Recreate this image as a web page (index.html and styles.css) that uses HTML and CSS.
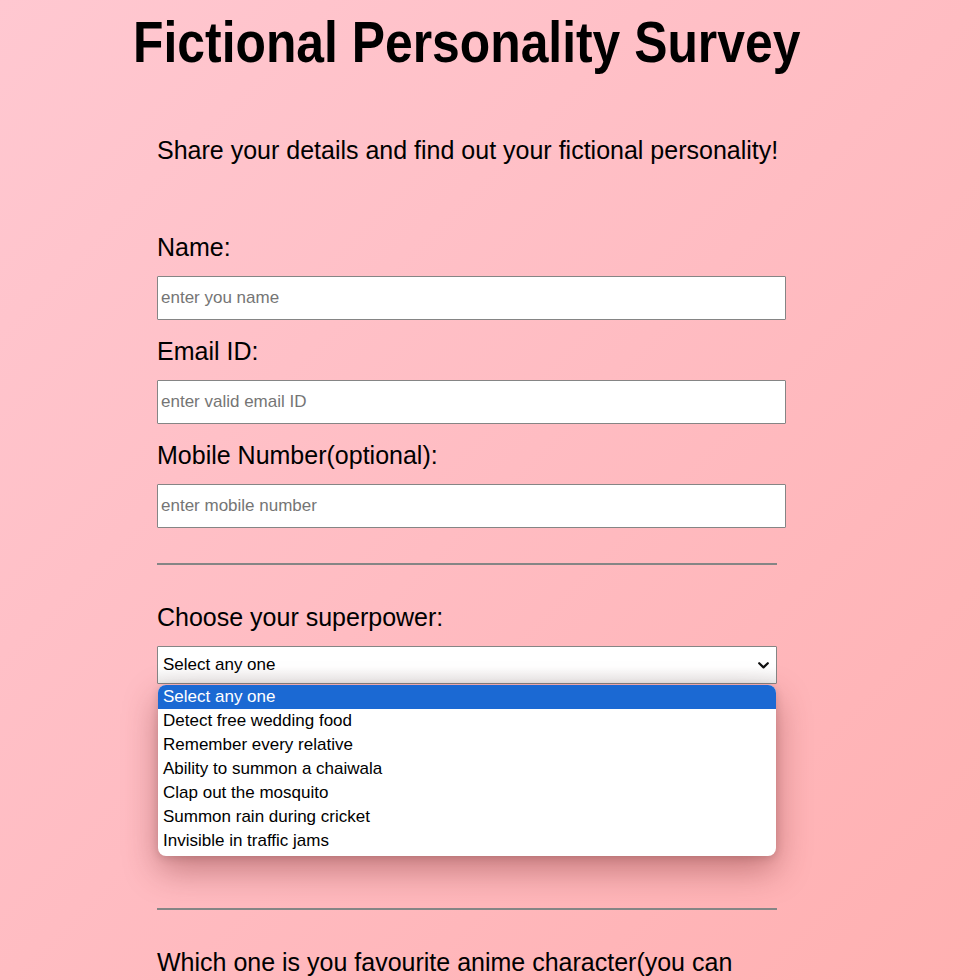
FILE: index.html
```html
<!DOCTYPE html>
<html lang="en">
<head>
<meta charset="utf-8">
<title>Fictional Personality Survey</title>
<link rel="stylesheet" href="styles.css">
</head>
<body>
<main class="page">
  <header class="header">
    <h1 class="title">Fictional Personality Survey</h1>
  </header>
  <p class="intro">Share your details and find out your fictional personality!</p>

  <form class="survey">
    <div class="field">
      <label class="label" for="name">Name:</label>
      <input class="text-input" id="name" type="text" placeholder="enter you name">
    </div>
    <div class="field">
      <label class="label" for="email">Email ID:</label>
      <input class="text-input" id="email" type="email" placeholder="enter valid email ID">
    </div>
    <div class="field">
      <label class="label" for="mobile">Mobile Number(optional):</label>
      <input class="text-input" id="mobile" type="tel" placeholder="enter mobile number">
    </div>

    <hr class="rule rule-first">

    <div class="field field-select">
      <span class="label">Choose your superpower:</span>
      <div class="select-wrap">
        <div class="select-box">
          <span>Select any one</span>
          <svg class="chevron" width="11" height="7" viewBox="0 0 11 7" aria-hidden="true">
            <path d="M1.2 1.2 L5.5 5.4 L9.8 1.2" fill="none" stroke="#111" stroke-width="2.2" stroke-linecap="round" stroke-linejoin="round"/>
          </svg>
        </div>
        <ul class="dropdown">
          <li class="option option-active">Select any one</li>
          <li class="option">Detect free wedding food</li>
          <li class="option">Remember every relative</li>
          <li class="option">Ability to summon a chaiwala</li>
          <li class="option">Clap out the mosquito</li>
          <li class="option">Summon rain during cricket</li>
          <li class="option">Invisible in traffic jams</li>
        </ul>
      </div>
    </div>

    <hr class="rule rule-second">

    <div class="field">
      <span class="label label-wrap">Which one is you favourite anime character(you can select more than one):</span>
    </div>
  </form>
</main>
</body>
</html>
```

FILE: styles.css
```css
html {
  min-height: 100%;
  background: linear-gradient(135deg, #ffc8d1 0%, #ffbcc2 50%, #ffb0b1 100%) fixed;
}

body {
  margin: 0;
  font-family: "Liberation Sans", Arial, sans-serif;
  color: #000;
}

.page {
  width: 620px;
  padding: 10px 0 60px 157px;
}

.header {
  display: flex;
  justify-content: center;
}

.title {
  margin: 0;
  font-size: 57px;
  line-height: 64px;
  font-weight: 700;
  white-space: nowrap;
  transform: scaleX(0.874);
  transform-origin: center;
}

.intro {
  margin: 62px 0 0;
  font-size: 25px;
  line-height: 28px;
  white-space: nowrap;
}

.survey {
  margin-top: 69px;
}

.field {
  display: flex;
  flex-direction: column;
}

.label {
  display: block;
  font-size: 25px;
  line-height: 28px;
  margin-bottom: 15px;
}

.text-input {
  box-sizing: border-box;
  width: 629px;
  height: 44px;
  margin: 0 0 17px;
  padding: 0 4px 0 3px;
  border: 1px solid #858585;
  border-radius: 1px;
  background: #fff;
  font-family: "Liberation Sans", Arial, sans-serif;
  font-size: 17px;
  color: #000;
  outline: none;
}

.text-input::placeholder {
  color: #757575;
}

.rule {
  border: 0;
  border-top: 2px solid #858585;
  height: 0;
  margin: 0;
}

.rule-first {
  margin-top: 18px;
  margin-bottom: 38px;
}

.rule-second {
  margin-top: 224px;
  margin-bottom: 38px;
}

.select-wrap {
  position: relative;
}

.select-box {
  box-sizing: border-box;
  height: 38px;
  display: flex;
  align-items: center;
  justify-content: space-between;
  padding: 0 7px 0 5px;
  border: 1px solid #858585;
  border-radius: 1px;
  background: linear-gradient(#ffffff 0%, #ffffff 55%, #ececec 100%);
  font-size: 17px;
}

.chevron {
  display: block;
}

.dropdown {
  position: absolute;
  top: 39px;
  left: 1px;
  right: 1px;
  margin: 0;
  padding: 0 0 3px;
  list-style: none;
  background: #fff;
  border-radius: 8px;
  overflow: hidden;
  box-shadow: 0 14px 34px rgba(110, 30, 30, 0.4), 0 2px 8px rgba(0, 0, 0, 0.15);
}

.option {
  height: 24px;
  line-height: 24px;
  padding-left: 5px;
  font-size: 17px;
  color: #000;
  white-space: nowrap;
}

.option-active {
  background: #1b69d3;
  color: #fff;
}

.label-wrap {
  margin-bottom: 0;
}
```
